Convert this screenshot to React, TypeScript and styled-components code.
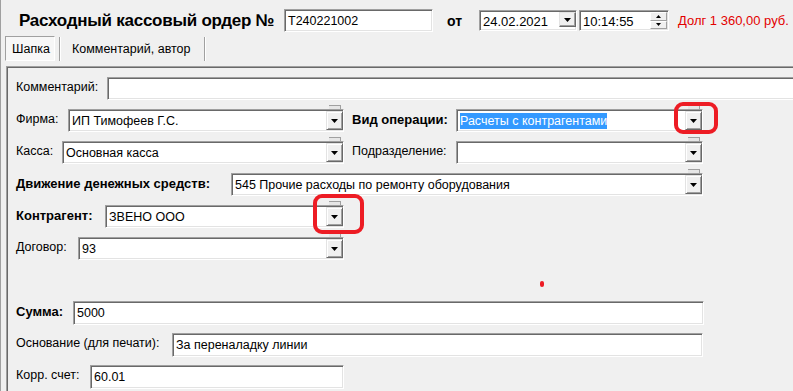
import React from 'react';
import styled, { createGlobalStyle } from 'styled-components';

const GlobalStyle = createGlobalStyle`
  html, body {
    margin: 0;
    padding: 0;
    background: #f0f0f0;
  }
  body {
    font-family: 'Liberation Sans', Arial, sans-serif;
    color: #000;
  }
`;

export default function App() {
  return (
    <Window>
      <GlobalStyle />
      <Header>
        <Title>Расходный кассовый ордер №</Title>
        <Field $w={149} $h={23}>
          <FieldText>T240221002</FieldText>
        </Field>
        <DateLabel>от</DateLabel>
        <Field $w={98} $h={21}>
          <FieldText $big>24.02.2021</FieldText>
          <SmallButton>
            <Arrow />
          </SmallButton>
        </Field>
        <Field $w={90} $h={21} $ml={2}>
          <FieldText $big>10:14:55</FieldText>
          <Spin>
            <SpinButton>
              <ArrowUp />
            </SpinButton>
            <SpinButton>
              <Arrow small />
            </SpinButton>
          </Spin>
        </Field>
        <Debt>Долг 1 360,00 руб.</Debt>
      </Header>

      <TabBar>
        <Tab $active>Шапка</Tab>
        <TabSep />
        <Tab>Комментарий, автор</Tab>
        <TabSep />
      </TabBar>

      <Panel>
        <Row>
          <Label $w={91}>Комментарий:</Label>
          <Field $grow $h={23}>
            <FieldText />
          </Field>
        </Row>
        <Row>
          <Label $w={52}>Фирма:</Label>
          <Combo w={276} value='ИП Тимофеев Г.С.' />
          <Label $w={104} $ml={8} $bold>
            Вид операции:
          </Label>
          <Combo w={247} value='Расчеты с контрагентами' selected />
        </Row>
        <Row>
          <Label $w={46}>Касса:</Label>
          <Combo w={282} value='Основная касса' />
          <Label $w={104} $ml={8}>
            Подразделение:
          </Label>
          <Combo w={247} value='' />
        </Row>
        <Row>
          <Label $w={215} $bold>
            Движение денежных средств:
          </Label>
          <Combo w={472} value='545 Прочие расходы по ремонту оборудования' />
        </Row>
        <Row>
          <Label $w={89} $bold>
            Контрагент:
          </Label>
          <Combo w={239} value='ЗВЕНО ООО' />
        </Row>
        <Row>
          <Label $w={62}>Договор:</Label>
          <Combo w={266} value='93' />
        </Row>
        <Row />
        <Row>
          <Label $w={57} $bold>
            Сумма:
          </Label>
          <Field $w={631} $h={24}>
            <FieldText>5000</FieldText>
          </Field>
        </Row>
        <Row>
          <Label $w={156}>Основание (для печати):</Label>
          <Field $w={531} $h={24}>
            <FieldText>За переналадку линии</FieldText>
          </Field>
        </Row>
        <Row>
          <Label $w={74}>Корр. счет:</Label>
          <Field $w={254} $h={24}>
            <FieldText>60.01</FieldText>
          </Field>
        </Row>
      </Panel>

      <Mark style={{ left: 673, top: 102, width: 44, height: 32 }} />
      <Mark style={{ left: 312, top: 194, width: 51, height: 40 }} />
      <Dot />
    </Window>
  );
}

function Combo({ w, value, selected }: { w: number; value: string; selected?: boolean }) {
  return (
    <Field $w={w} $h={23}>
      <FieldText>{selected ? <Selection>{value}</Selection> : value}</FieldText>
      <DropButton>
        <Arrow />
      </DropButton>
    </Field>
  );
}

function Arrow({ small }: { small?: boolean }) {
  return (
    <svg width={small ? 5 : 7} height={small ? 3 : 4} viewBox={small ? '0 0 5 3' : '0 0 7 4'}>
      <polygon points={small ? '0,0 5,0 2.5,3' : '0,0 7,0 3.5,4'} fill='#000' />
    </svg>
  );
}

function ArrowUp() {
  return (
    <svg width={5} height={3} viewBox='0 0 5 3'>
      <polygon points='0,3 5,3 2.5,0' fill='#000' />
    </svg>
  );
}

const Window = styled.div`
  position: relative;
  width: 792px;
  height: 391px;
  overflow: hidden;
  border-left: 1px solid #a0a0a0;
  background: #f0f0f0;
`;

const Header = styled.div`
  display: flex;
  align-items: center;
  height: 23px;
  margin-top: 9px;
  padding-left: 18px;
`;

const Title = styled.div`
  width: 265px;
  font-size: 17px;
  font-weight: 700;
  letter-spacing: -0.25px;
  white-space: nowrap;
`;

const DateLabel = styled.div`
  width: 32px;
  margin-left: 14px;
  font-size: 14px;
  font-weight: 700;
`;

const Debt = styled.div`
  margin-left: 9px;
  font-size: 13px;
  color: #e30000;
  white-space: nowrap;
`;

const Field = styled.div<{ $w?: number; $h: number; $grow?: boolean; $ml?: number }>`
  display: flex;
  box-sizing: border-box;
  flex: ${(p) => (p.$grow ? '1' : `0 0 ${p.$w}px`)};
  height: ${(p) => p.$h}px;
  margin-left: ${(p) => p.$ml ?? 0}px;
  background: #fff;
  border: 1px solid;
  border-color: #a0a0a0 #fff #fff #a0a0a0;
  box-shadow: inset 1px 1px 0 #696969, inset -1px -1px 0 #e3e3e3;
`;

const FieldText = styled.div<{ $big?: boolean }>`
  flex: 1;
  display: flex;
  align-items: center;
  padding: 1px 0 0 3px;
  font-size: ${(p) => (p.$big ? 13 : 12.5)}px;
  white-space: nowrap;
  overflow: hidden;
`;

const Selection = styled.span`
  background: #3399ff;
  color: #fff;
  line-height: 16px;
`;

const DropButton = styled.div`
  position: relative;
  box-sizing: border-box;
  width: 17px;
  margin: 1px 0 1px 0;
  display: flex;
  align-items: center;
  justify-content: center;
  background: #f0f0f0;
  border: 1px solid;
  border-color: #e3e3e3 #696969 #696969 #e3e3e3;
  box-shadow: inset 1px 1px 0 #fff, inset -1px -1px 0 #a0a0a0;

  &::before {
    content: '';
    position: absolute;
    left: 2px;
    right: 1px;
    top: -7px;
    height: 3px;
    background: #e6e6e6;
    border-top: 1px solid #a0a0a0;
    border-right: 1px solid #a0a0a0;
  }
`;

const SmallButton = styled.div`
  box-sizing: border-box;
  width: 17px;
  height: 15px;
  margin: 1px 0 0 0;
  display: flex;
  align-items: center;
  justify-content: center;
  background: #f0f0f0;
  border: 1px solid;
  border-color: #e3e3e3 #696969 #696969 #e3e3e3;
  box-shadow: inset -1px -1px 0 #a0a0a0;
`;

const Spin = styled.div`
  display: flex;
  flex-direction: column;
  width: 17px;
  margin: 1px 1px 1px 0;
`;

const SpinButton = styled.div`
  box-sizing: border-box;
  flex: 1;
  display: flex;
  align-items: center;
  justify-content: center;
  background: #f0f0f0;
  border: 1px solid;
  border-color: #fff #a0a0a0 #a0a0a0 #fff;
`;

const TabBar = styled.div`
  display: flex;
  align-items: stretch;
  height: 25px;
  margin-top: 4px;
  padding-left: 4px;
`;

const Tab = styled.div<{ $active?: boolean }>`
  box-sizing: border-box;
  display: flex;
  align-items: center;
  font-size: 12.5px;
  white-space: nowrap;
  ${(p) =>
    p.$active
      ? `
    width: 50px;
    padding-left: 6px;
    background: #f7f7f7;
    border: 1px solid;
    border-color: #a0a0a0 #fff #fff #a0a0a0;
  `
      : `
    padding: 0 10px 0 11px;
  `}
`;

const TabSep = styled.div`
  width: 1px;
  margin-left: 4px;
  margin-top: 1px;
  background: #a0a0a0;
  border-right: 1px solid #fff;
`;

const Panel = styled.div`
  box-sizing: border-box;
  width: 820px;
  height: 360px;
  margin-top: 5px;
  margin-left: 5px;
  padding: 10px 0 0 9px;
  border-top: 1px solid #a0a0a0;
  border-left: 1px solid #a0a0a0;
  box-shadow: inset 1px 1px 0 #696969;
`;

const Row = styled.div`
  display: flex;
  align-items: center;
  height: 23px;
  margin-bottom: 9px;
`;

const Label = styled.div<{ $w: number; $ml?: number; $bold?: boolean }>`
  flex: 0 0 ${(p) => p.$w}px;
  margin-left: ${(p) => p.$ml ?? 0}px;
  margin-top: -3px;
  font-size: ${(p) => (p.$bold ? 13 : 12.5)}px;
  font-weight: ${(p) => (p.$bold ? 700 : 400)};
  white-space: nowrap;
`;

const Mark = styled.div`
  position: absolute;
  box-sizing: border-box;
  border: 4px solid #ed1c24;
  border-radius: 9px;
`;

const Dot = styled.div`
  position: absolute;
  left: 539px;
  top: 281px;
  width: 4px;
  height: 6px;
  border-radius: 2px;
  background: #ed1c24;
`;
